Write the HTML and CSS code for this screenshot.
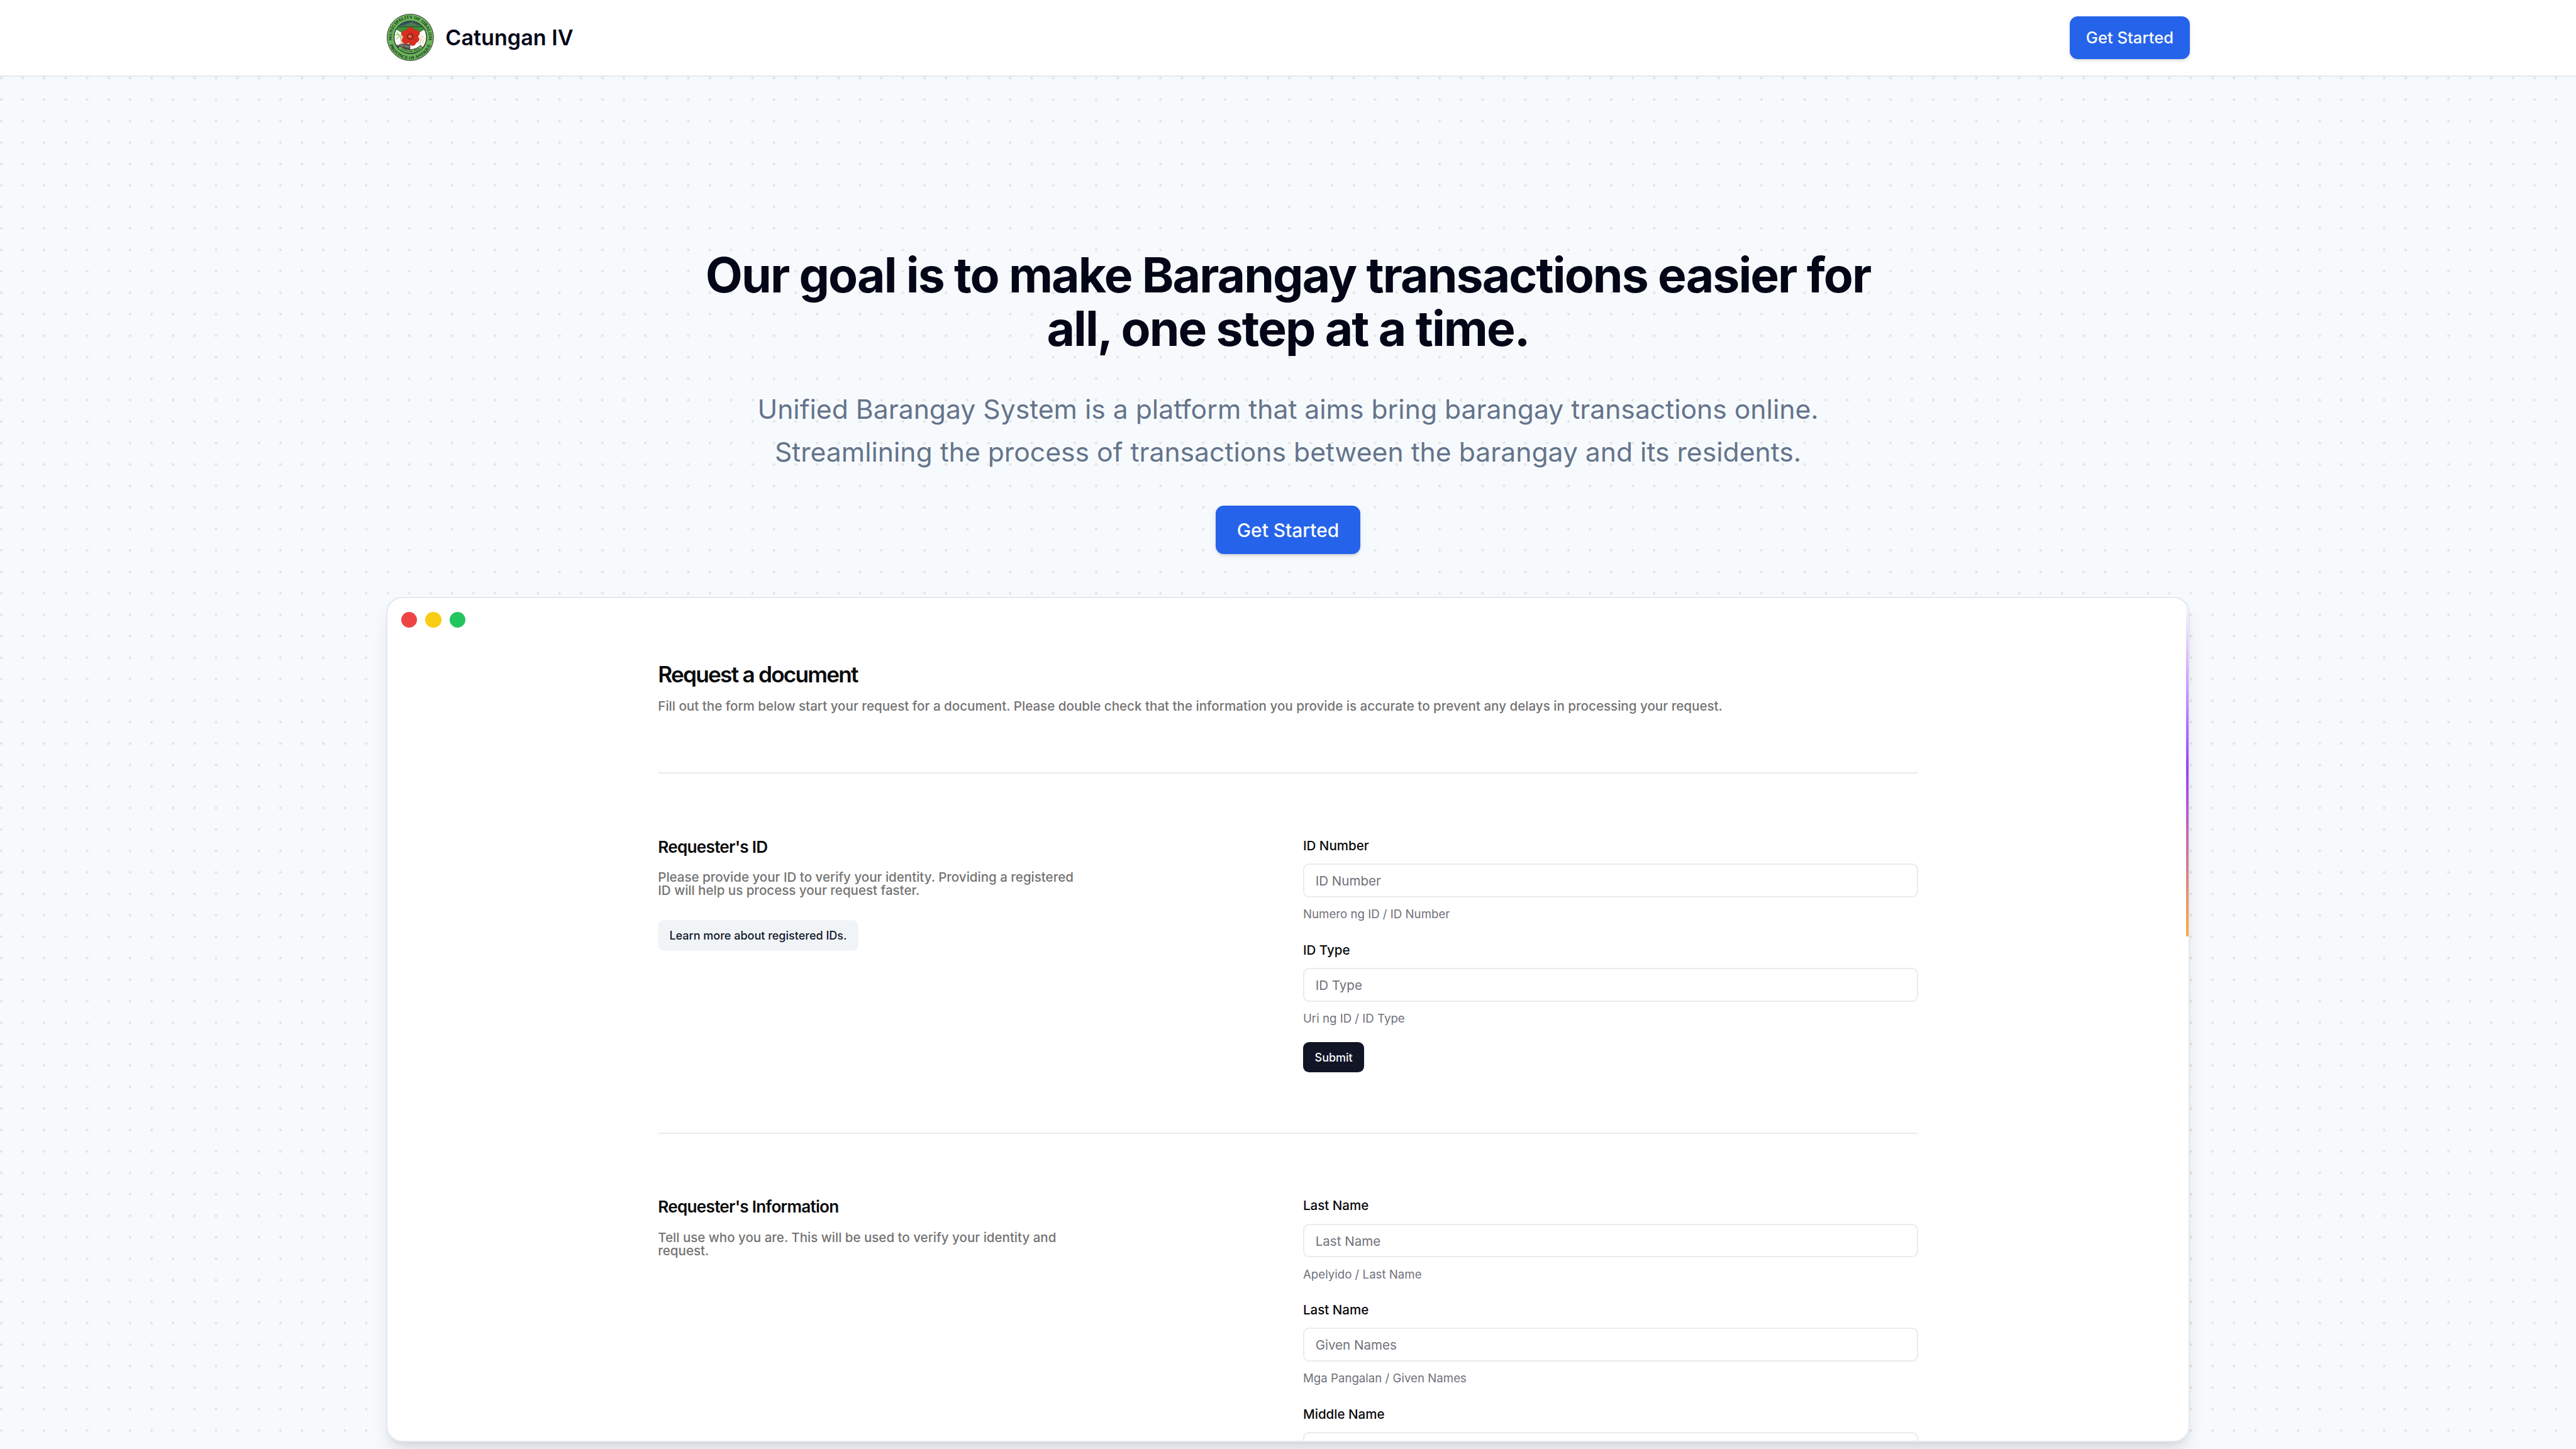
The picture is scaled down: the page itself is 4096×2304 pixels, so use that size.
FILE: index.html
```html
<!DOCTYPE html>
<html lang="en">
<head>
<meta charset="utf-8">
<title>Catungan IV</title>
<link rel="stylesheet" href="styles.css">
</head>
<body>
<header class="site-header">
  <div class="container site-header__row">
    <a class="brand">
      <svg class="brand__seal" viewBox="-1.3 -1.3 108.6 108.6" aria-hidden="true">
        <defs>
          <clipPath id="inner"><circle cx="53" cy="53" r="36"/></clipPath>
          <path id="arc-top" d="M12 59 A41.500 41.500 0 1 1 94 59"/>
          <path id="arc-bottom" d="M6 68 A49.300 49.300 0 0 0 100 68"/>
          <path id="arc-seal" d="M30 80 Q53 94 78 78"/>
        </defs>
        <circle cx="53" cy="53" r="52.300" fill="#6cb55c" stroke="#333a35" stroke-width="1.400"/>
        <circle cx="53" cy="53" r="36.500" fill="#fff" stroke="#10181a" stroke-width="1.600"/>
        <g clip-path="url(#inner)">
          <path d="M14 14H92V34H14Z" fill="#33496a"/>
          <path d="M24 28 40 25 56 18 68 24 84 28V36H24Z" fill="#4c7a52"/>
          <path d="M14 27.500H92V31L53 55 14 31Z" fill="#3f8f3c"/>
          <path d="M22 28H84V30H22Z" fill="#2b5c33"/>
          <path d="M20 71 34 67 53 68V82H30Z" fill="#5d5555"/>
          <path d="M26 70 36 72 32 78M40 72 50 75" stroke="#aaa19b" stroke-width="1.500" fill="none"/>
          <path d="M30 50Q33 60 33 69" stroke="#c79a55" stroke-width="1.600" fill="none"/>
          <path d="M29 49Q22 43 18 48 24 48 29 50 23 52 21 58 27 54 30 50 33 53 35 56 35 50 30 49 33 44 38 46 34 41 29 48 26 41 21 42Z" fill="#8ed05a"/>
          <path d="M72 68Q70 54 80 48M75 70Q76 56 83 50M80 68Q83 60 85 54M72 56Q76 58 78 62" stroke="#e3d5ae" stroke-width="2" fill="none"/>
        </g>
        <g fill="#d8301f" stroke="#a82217" stroke-width=".7">
          <ellipse cx="53" cy="39" rx="9" ry="9"/>
          <ellipse cx="65" cy="44" rx="9" ry="8"/>
          <ellipse cx="64" cy="57" rx="8.500" ry="8"/>
          <ellipse cx="58" cy="64" rx="8" ry="7.500"/>
          <ellipse cx="43" cy="59" rx="9" ry="8.500"/>
          <ellipse cx="42" cy="45" rx="9" ry="8"/>
        </g>
        <circle cx="53" cy="51" r="8" fill="#c02a1c"/>
        <circle cx="52.500" cy="51" r="6" fill="#5c1712"/>
        <circle cx="52.500" cy="51" r="4.300" fill="#e8694a"/>
        <path d="M29 72 25 78Q52 101 81 78L77 71Q54 90 29 72Z" fill="#6cb55c" stroke="#10181a" stroke-width="1.200"/>
        <text class="seal-text seal-text--small"><textPath href="#arc-seal" startOffset="50%">OFFICIAL SEAL</textPath></text>
        <text class="seal-text"><textPath href="#arc-top" startOffset="50%">MUNICIPALITY OF SIBALOM</textPath></text>
        <text class="seal-text"><textPath href="#arc-bottom" startOffset="50%">PROVINCE OF ANTIQUE</textPath></text>
      </svg>
      <span class="brand__name">Catungan IV</span>
    </a>
    <a class="button button--small">Get Started</a>
  </div>
</header>

<main class="hero">
  <svg class="hero__dots" aria-hidden="true">
    <defs>
      <pattern id="dots" width="34.13333" height="34.13333" patternUnits="userSpaceOnUse">
        <circle cx="2.13333" cy="2.13333" r="2.13333" fill="#e2e4e5"/>
      </pattern>
    </defs>
    <rect width="100%" height="100%" fill="url(#dots)"/>
  </svg>
  <div class="container hero__content">
    <h1 class="hero__title">Our goal is to make Barangay transactions easier for<br>all, one step at a time.</h1>
    <p class="hero__lead">Unified Barangay System is a platform that aims bring barangay transactions online.<br>Streamlining the process of transactions between the barangay and its residents.</p>
    <a class="button">Get Started</a>

    <section class="window">
      <div class="window__beam"></div>
      <div class="window__controls">
        <span class="window__dot window__dot--red"></span>
        <span class="window__dot window__dot--yellow"></span>
        <span class="window__dot window__dot--green"></span>
      </div>
      <div class="doc">
        <div class="doc__head">
          <h2 class="doc__title">Request a document</h2>
          <p class="doc__text doc__text--wide">Fill out the form below start your request for a document. Please double check that the information you provide is accurate to prevent any delays in processing your request.</p>
        </div>
        <div class="doc__section">
          <div class="doc__intro">
            <h3 class="doc__subtitle">Requester's ID</h3>
            <p class="doc__text">Please provide your ID to verify your identity. Providing a registered<br>ID will help us process your request faster.</p>
            <a class="doc__link">Learn more about registered IDs.</a>
          </div>
          <div class="doc__fields">
            <div class="field"><label class="field__label">ID Number</label><div class="field__input">ID Number</div><p class="field__help">Numero ng ID / ID Number</p></div>
            <div class="field"><label class="field__label">ID Type</label><div class="field__input">ID Type</div><p class="field__help">Uri ng ID / ID Type</p></div>
            <a class="doc__submit">Submit</a>
          </div>
        </div>
        <div class="doc__section">
          <div class="doc__intro">
            <h3 class="doc__subtitle">Requester's Information</h3>
            <p class="doc__text">Tell use who you are. This will be used to verify your identity and<br>request.</p>
          </div>
          <div class="doc__fields">
            <div class="field"><label class="field__label">Last Name</label><div class="field__input">Last Name</div><p class="field__help">Apelyido / Last Name</p></div>
            <div class="field"><label class="field__label">Last Name</label><div class="field__input">Given Names</div><p class="field__help">Mga Pangalan / Given Names</p></div>
            <div class="field"><label class="field__label">Middle Name</label><div class="field__input"></div></div>
          </div>
        </div>
      </div>
    </section>
  </div>
</main>
</body>
</html>
```
FILE: styles.css
```css
/* One rem is one unit of a 1920-wide layout. */
html { font-size: 2.133333px; }

* { box-sizing: border-box; margin: 0; }

body {
  height: 1080rem;
  overflow: hidden;
  display: flex;
  flex-direction: column;
  background: #f7fafd;
  color: #020617;
  font-family: Inter, "Liberation Sans", sans-serif;
  font-size: 16rem;
}

.container { width: 1344rem; margin: 0 auto; }

.site-header {
  flex: none;
  height: 57rem;
  background: #fff;
  border-bottom: 1rem solid #e2e8f0;
}

.site-header__row {
  height: 56rem;
  display: flex;
  align-items: center;
  justify-content: space-between;
}

.brand { display: flex; align-items: center; gap: 8rem; }
.brand__seal { width: 36rem; height: 36rem; }
.brand__name { font-weight: 600; line-height: 24rem; white-space: nowrap; }

.seal-text {
  font: 700 10.2px "Liberation Serif", serif;
  fill: #14301a;
  text-anchor: middle;
}
.seal-text--small { font: 400 6.6px "Liberation Sans", sans-serif; }

.button {
  display: inline-flex;
  align-items: center;
  height: 36rem;
  padding: 0 16rem;
  border-radius: 6rem;
  background: #2563eb;
  color: #f8fafc;
  font-size: 14rem;
  font-weight: 500;
  white-space: nowrap;
  box-shadow: 0 1rem 3rem rgb(0 0 0 / .1), 0 1rem 2rem -1rem rgb(0 0 0 / .1);
}
.button--small { height: 32rem; padding: 0 12rem; font-size: 12rem; }

.hero { position: relative; flex: 1; min-height: 0; }
.hero__dots { position: absolute; inset: 0; width: 100%; height: 100%; }

.hero__content {
  position: relative;
  display: flex;
  flex-direction: column;
  align-items: center;
  padding-top: 128rem;
  text-align: center;
}
.hero__title {
  font-size: 36rem;
  line-height: 40rem;
  font-weight: 700;
  letter-spacing: -.025em;
  white-space: nowrap;
}
.hero__lead {
  margin: 24rem 0;
  font-size: 20rem;
  line-height: 32rem;
  color: #64748b;
  white-space: nowrap;
}

.window {
  position: relative;
  width: 100%;
  height: 630rem;
  margin-top: 32rem;
  overflow: hidden;
  border: 1rem solid #e2e8f0;
  border-radius: 12rem;
  background: #fff;
  text-align: left;
  box-shadow: 0 10rem 15rem -3rem rgb(0 0 0 / .1), 0 4rem 6rem -4rem rgb(0 0 0 / .1);
}
.window__beam {
  position: absolute;
  top: 0;
  right: 0;
  width: 1.7rem;
  height: 252rem;
  background: linear-gradient(to top, #ffaa40, #9c40ff, transparent);
}
.window__controls { display: flex; gap: 6rem; padding: 10rem; }
.window__dot { width: 12rem; height: 12rem; border-radius: 50%; }
.window__dot--red { background: #ef4444; }
.window__dot--yellow { background: #facc15; }
.window__dot--green { background: #22c55e; }

/* Form preview inside the window */
.doc {
  width: 939.4rem;
  margin-left: 201.5rem;
  padding-top: 14.8rem;
  color: #09090b;
  white-space: nowrap;
}
.doc__head { height: 83.1rem; }
.doc__title {
  font-size: 16.5rem;
  line-height: 20rem;
  font-weight: 600;
  letter-spacing: -.05em;
}
.doc__text {
  margin-top: 11.9rem;
  font-size: 9.62rem;
  line-height: 9.8rem;
  font-weight: 500;
  color: #737373;
}
.doc__text--wide { margin-top: 9rem; font-size: 9.655rem; }
.doc__section {
  display: grid;
  grid-template-columns: 480.8rem 1fr;
  height: 268.2rem;
  padding-top: 48.6rem;
  border-top: 1rem solid #ebebec;
}
.doc__subtitle {
  font-size: 12.25rem;
  line-height: 12.2rem;
  font-weight: 600;
  letter-spacing: -.028em;
}
.doc__link {
  display: flex;
  align-items: center;
  width: fit-content;
  height: 23.2rem;
  margin-top: 16.6rem;
  padding: 0 8.5rem;
  border-radius: 4.5rem;
  background: #f1f4f7;
  color: #0f172a;
  font-size: 8.44rem;
  font-weight: 500;
}
.field { height: 77.7rem; font-size: 9.64rem; }
.field__label { display: block; line-height: 10rem; font-weight: 500; }
.field__input {
  height: 25.1rem;
  margin-top: 8.5rem;
  padding: 0 8.3rem;
  border: 1rem solid #ebebed;
  border-radius: 4.5rem;
  line-height: 24.2rem;
  color: #71717a;
}
.field__help {
  margin-top: 5.85rem;
  font-size: 8.75rem;
  line-height: 13.8rem;
  color: #71717a;
}
.doc__submit {
  display: flex;
  align-items: center;
  width: fit-content;
  height: 22.5rem;
  margin-top: -3.8rem;
  padding: 0 8.7rem;
  border-radius: 4.5rem;
  background: #111525;
  color: #f8fafc;
  font-size: 8.44rem;
  font-weight: 500;
}
```
